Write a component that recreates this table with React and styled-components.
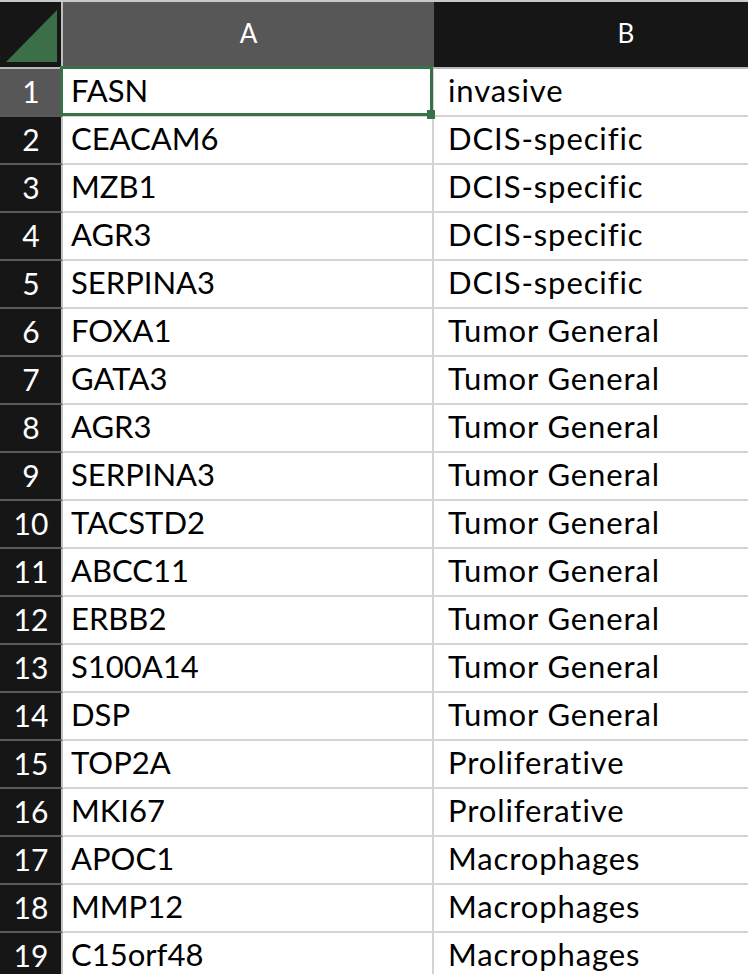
import styled, { createGlobalStyle } from "styled-components";

const GlobalStyle = createGlobalStyle`
  html, body {
    margin: 0;
    padding: 0;
    background: #ffffff;
    overflow: hidden;
  }
  * {
    box-sizing: border-box;
  }
`;

const rows = [
  ["FASN", "invasive"],
  ["CEACAM6", "DCIS-specific"],
  ["MZB1", "DCIS-specific"],
  ["AGR3", "DCIS-specific"],
  ["SERPINA3", "DCIS-specific"],
  ["FOXA1", "Tumor General"],
  ["GATA3", "Tumor General"],
  ["AGR3", "Tumor General"],
  ["SERPINA3", "Tumor General"],
  ["TACSTD2", "Tumor General"],
  ["ABCC11", "Tumor General"],
  ["ERBB2", "Tumor General"],
  ["S100A14", "Tumor General"],
  ["DSP", "Tumor General"],
  ["TOP2A", "Proliferative"],
  ["MKI67", "Proliferative"],
  ["APOC1", "Macrophages"],
  ["MMP12", "Macrophages"],
  ["C15orf48", "Macrophages"],
];

const Viewport = styled.div`
  width: 748px;
  height: 974px;
  overflow: hidden;
`;

const Sheet = styled.div`
  display: grid;
  grid-template-columns: 63px 371px 384px;
  grid-auto-rows: 48px;
  grid-template-rows: 67px;
  width: 818px;
  border-top: 2px solid #c9c9c9;
  font-family: Lato, "Open Sans", sans-serif;
`;

const Corner = styled.div`
  background: #161616;
  border-right: 2px solid #bdbdbd;
  border-bottom: 2px solid #b8b8b8;
  position: relative;

  svg {
    position: absolute;
    left: 0;
    top: 0;
  }
`;

const ColHeader = styled.div`
  background: ${(p) => (p.$active ? "#575757" : "#161616")};
  border-bottom: 2px solid #b8b8b8;
  color: #ffffff;
  font-size: 26px;
  display: flex;
  justify-content: center;
  align-items: flex-start;
  padding-top: 18px;
  line-height: 1;
`;

const RowHeader = styled.div`
  background: ${(p) => (p.$active ? "#575757" : "#161616")};
  border-right: 2px solid #c4c4c4;
  border-bottom: 2px solid #5a5a5a;
  color: #ffffff;
  font-size: 30px;
  line-height: 1;
  display: flex;
  justify-content: center;
  padding-top: 7px;
  padding-left: 1px;
`;

const Cell = styled.div`
  position: relative;
  background: #ffffff;
  border-bottom: 2px solid #d4d4d4;
  border-right: ${(p) => (p.$last ? "none" : "2px solid #d4d4d4")};
  color: #000000;
  font-size: 31px;
  letter-spacing: ${(p) => (p.$last ? "0.9px" : "0")};
  line-height: 1;
  padding-top: 6px;
  padding-left: ${(p) => (p.$last ? "14px" : "8px")};
  white-space: nowrap;
`;

const Selection = styled.div`
  position: absolute;
  z-index: 2;
  left: -3px;
  top: -3px;
  right: -1px;
  bottom: -1px;
  border: 3px solid #387048;
  pointer-events: none;
`;

const FillHandle = styled.div`
  position: absolute;
  right: -5px;
  bottom: -6px;
  width: 8px;
  height: 9px;
  background: #387048;
`;

export default function App() {
  return (
    <>
      <GlobalStyle />
      <Viewport>
        <Sheet>
          <Corner>
            <svg width="61" height="65" viewBox="0 0 61 65">
              <polygon points="6,60 57,60 57,8" fill="#3c6e48" />
            </svg>
          </Corner>
          <ColHeader $active>A</ColHeader>
          <ColHeader>B</ColHeader>
          {rows.map(([gene, group], i) => (
            <Row key={i} n={i + 1} gene={gene} group={group} />
          ))}
        </Sheet>
      </Viewport>
    </>
  );
}

function Row({ n, gene, group }) {
  const selected = n === 1;
  return (
    <>
      <RowHeader $active={selected}>{n}</RowHeader>
      <Cell>
        {gene}
        {selected && (
          <Selection>
            <FillHandle />
          </Selection>
        )}
      </Cell>
      <Cell $last>{group}</Cell>
    </>
  );
}
